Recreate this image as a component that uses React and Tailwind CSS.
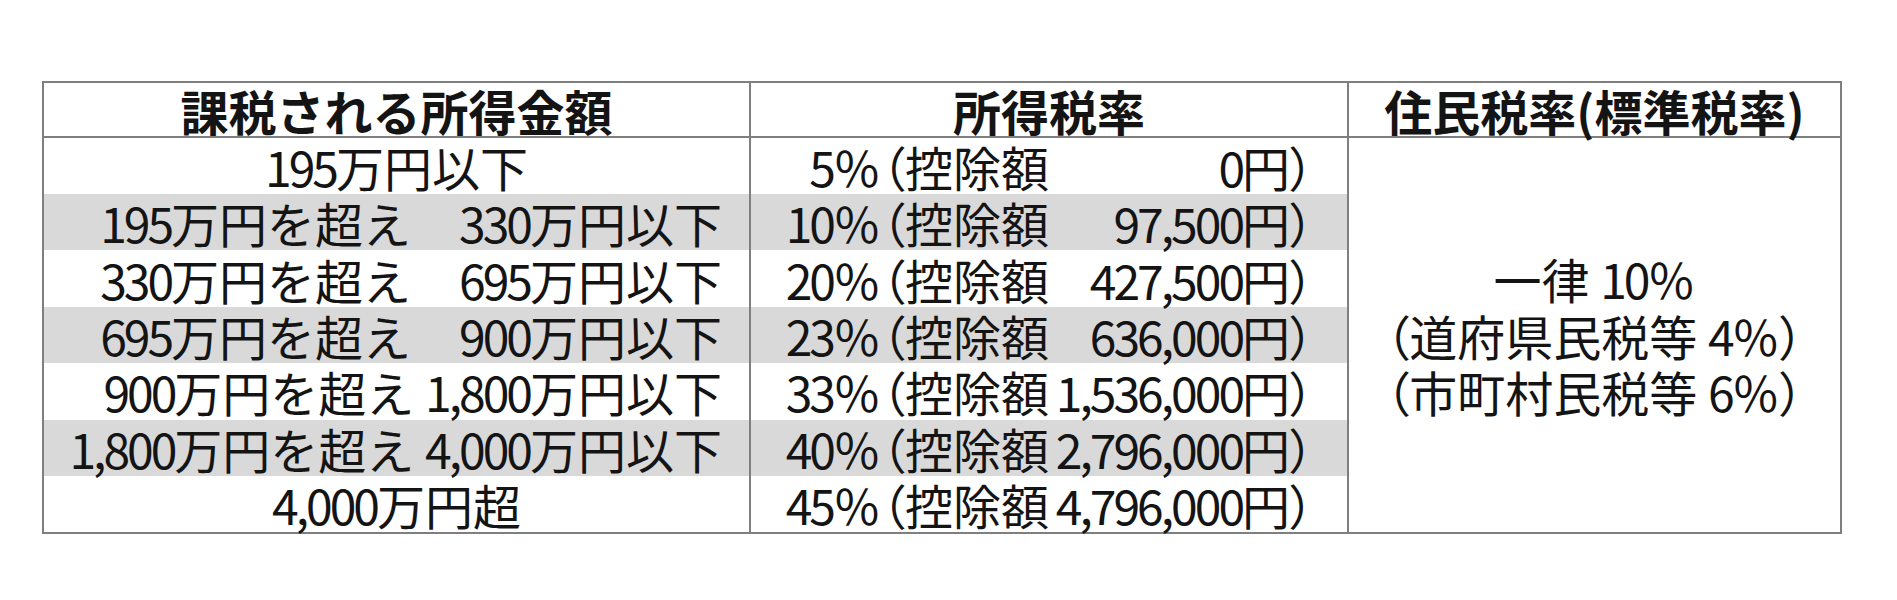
const rows = [
  { range: '195万円以下', center: true, pct: '5', amt: '0' },
  { range: '195万円を超え\u3000330万円以下', shade: true, pct: '10', amt: '97,500' },
  { range: '330万円を超え\u3000695万円以下', pct: '20', amt: '427,500' },
  { range: '695万円を超え\u3000900万円以下', shade: true, pct: '23', amt: '636,000' },
  { range: '900万円を超え 1,800万円以下', pct: '33', amt: '1,536,000' },
  { range: '1,800万円を超え 4,000万円以下', shade: true, pct: '40', amt: '2,796,000' },
  { range: '4,000万円超', center: true, pct: '45', amt: '4,796,000' },
]

// proportional full-width brackets
function Paren({ children }) {
  return <span className="[font-feature-settings:'palt']">{children}</span>
}

// the original uses narrow digits, so tighten number runs
function Num({ text }) {
  return text.split(/([\d,]+)/).map((part, i) =>
    /^[\d,]+$/.test(part) ? (
      <span key={i} className="tracking-[-3px]">
        {part}
      </span>
    ) : (
      <span key={i}>{part}</span>
    )
  )
}

export default function App() {
  return (
    <div className="w-[1897px] h-[600px] bg-white overflow-hidden pt-[81px] pl-[42px]">
      <table className="table-fixed border-collapse border-2 border-[#7f7f7f] w-[1800px] text-[48px] text-[#141414] font-['Noto_Sans_CJK_JP',sans-serif]">
        <colgroup>
          <col className="w-[707px]" />
          <col className="w-[598px]" />
          <col />
        </colgroup>
        <thead>
          <tr className="h-[55px]">
            <th className="border-2 border-[#7f7f7f] p-0 font-bold leading-[52px] text-center align-bottom">
              課税される所得金額
            </th>
            <th className="border-2 border-[#7f7f7f] p-0 font-bold leading-[52px] text-center align-bottom">
              所得税率
            </th>
            <th className="border-2 border-[#7f7f7f] p-0 font-bold leading-[52px] text-center align-bottom">
              住民税率(標準税率)
            </th>
          </tr>
        </thead>
        <tbody>
          {rows.map((r, i) => (
            <tr key={i} className="h-[56.4px]">
              <td
                className={`border-x-2 border-[#7f7f7f] p-0 leading-[56px] whitespace-nowrap ${
                  r.center ? 'text-center' : 'text-right pr-[27px]'
                } ${r.shade ? 'bg-[#d9d9d9]' : ''}`}
              >
                <Num text={r.range} />
              </td>
              <td
                className={`border-x-2 border-[#7f7f7f] p-0 leading-[56px] whitespace-nowrap ${
                  r.shade ? 'bg-[#d9d9d9]' : ''
                }`}
              >
                <div className="flex">
                  <span className="w-[130px] text-right">
                    <Num text={r.pct} />％
                  </span>
                  <Paren>（</Paren>
                  <span>控除額</span>
                  <span className="w-[193px] text-right">
                    <Num text={r.amt} />
                  </span>
                  <span>円</span>
                  <Paren>）</Paren>
                </div>
              </td>
              {i === 0 && (
                <td
                  rowSpan={7}
                  className="border-x-2 border-[#7f7f7f] p-0 text-center align-middle whitespace-nowrap"
                >
                  <div className="leading-[56.4px]">
                    一律 <Num text="10" />％
                  </div>
                  <div className="leading-[56.4px]">
                    <Paren>（</Paren>道府県民税等 <Num text="4" />％<Paren>）</Paren>
                  </div>
                  <div className="leading-[56.4px]">
                    <Paren>（</Paren>市町村民税等 <Num text="6" />％<Paren>）</Paren>
                  </div>
                </td>
              )}
            </tr>
          ))}
        </tbody>
      </table>
    </div>
  )
}
